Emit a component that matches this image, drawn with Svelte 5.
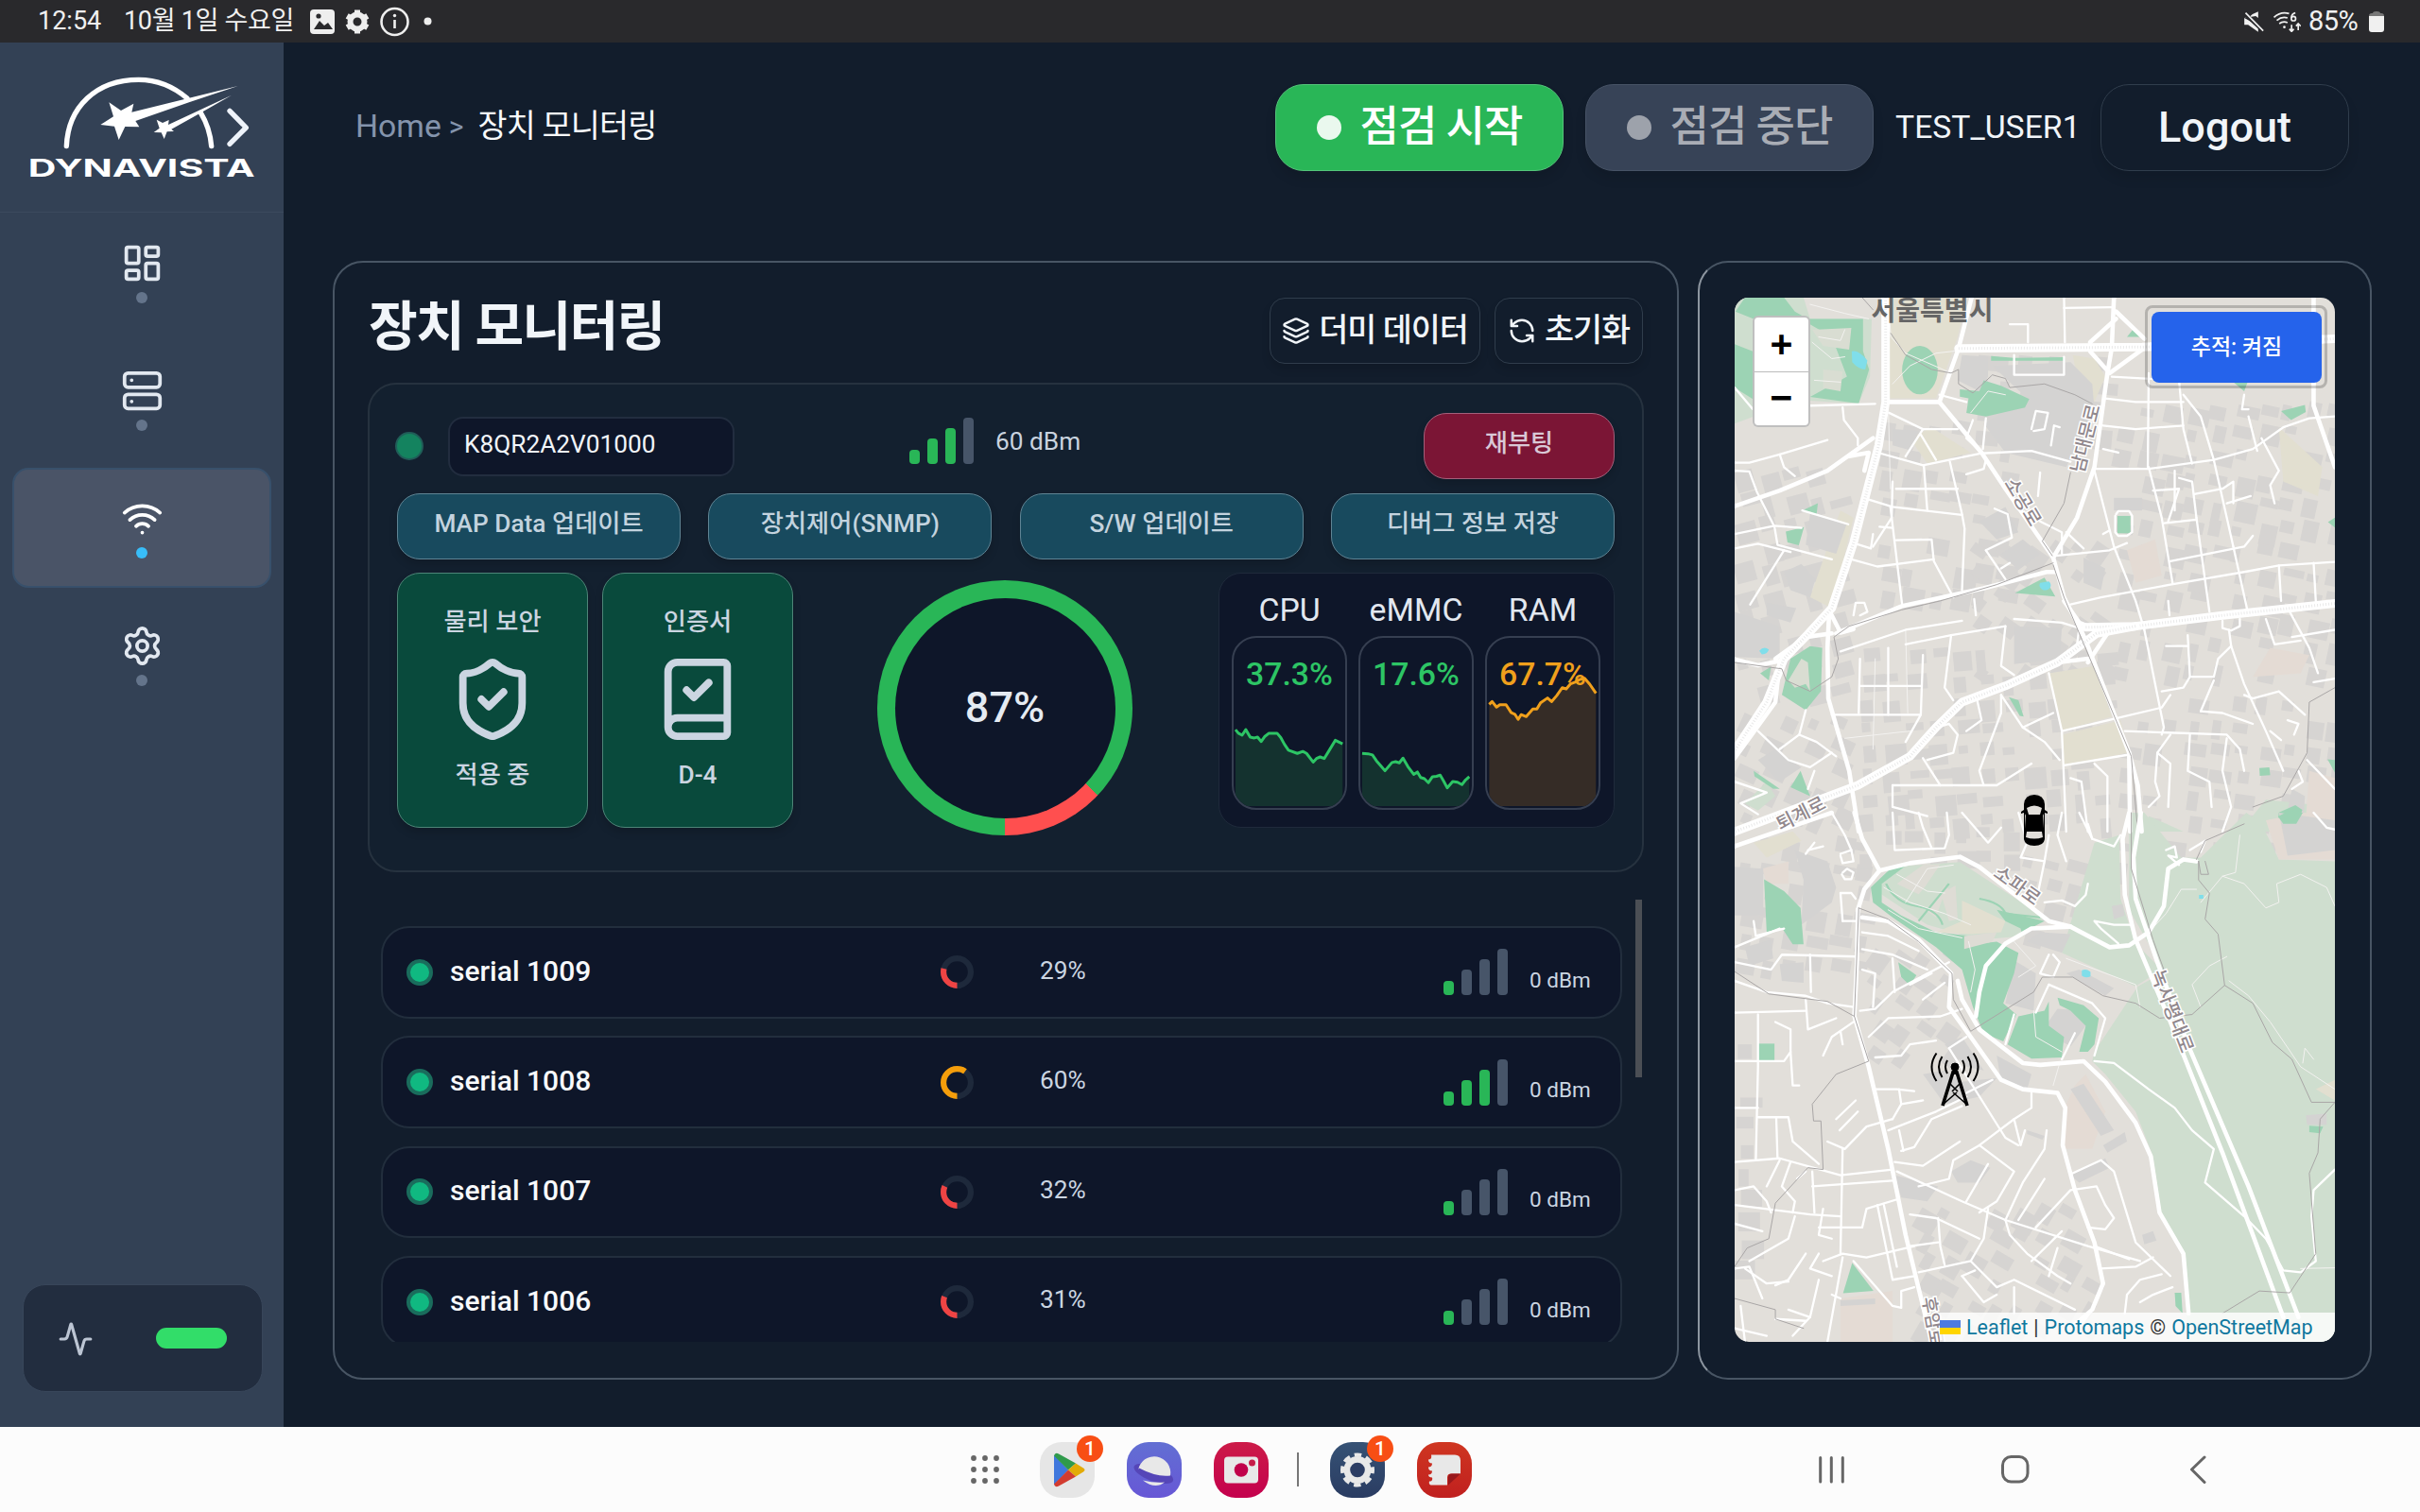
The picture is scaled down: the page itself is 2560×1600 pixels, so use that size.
<script>
  const nav = [
    { id: 'dashboard', active: false },
    { id: 'server', active: false },
    { id: 'wifi', active: true },
    { id: 'settings', active: false }
  ];
  const icons = {
    dashboard: 'M4 3h5a1 1 0 0 1 1 1v7a1 1 0 0 1-1 1H4a1 1 0 0 1-1-1V4a1 1 0 0 1 1-1z M15 3h5a1 1 0 0 1 1 1v3a1 1 0 0 1-1 1h-5a1 1 0 0 1-1-1V4a1 1 0 0 1 1-1z M15 12h5a1 1 0 0 1 1 1v7a1 1 0 0 1-1 1h-5a1 1 0 0 1-1-1v-7a1 1 0 0 1 1-1z M4 16h5a1 1 0 0 1 1 1v3a1 1 0 0 1-1 1H4a1 1 0 0 1-1-1v-3a1 1 0 0 1 1-1z',
    server: 'M4 2h16a2 2 0 0 1 2 2v4a2 2 0 0 1-2 2H4a2 2 0 0 1-2-2V4a2 2 0 0 1 2-2z M4 14h16a2 2 0 0 1 2 2v4a2 2 0 0 1-2 2H4a2 2 0 0 1-2-2v-4a2 2 0 0 1 2-2z M6 6h.01 M6 18h.01',
    wifi: 'M12 20h.01 M2 8.82a15 15 0 0 1 20 0 M5 12.859a10 10 0 0 1 14 0 M8.5 16.429a5 5 0 0 1 7 0',
    settings: 'M9.671 4.136a2.34 2.34 0 0 1 4.659 0 2.34 2.34 0 0 0 3.319 1.915 2.34 2.34 0 0 1 2.33 4.033 2.34 2.34 0 0 0 0 3.831 2.34 2.34 0 0 1-2.33 4.033 2.34 2.34 0 0 0-3.319 1.915 2.34 2.34 0 0 1-4.659 0 2.34 2.34 0 0 0-3.32-1.915 2.34 2.34 0 0 1-2.33-4.033 2.34 2.34 0 0 0 0-3.831A2.34 2.34 0 0 1 6.35 6.051a2.34 2.34 0 0 0 3.319-1.915 M15 12a3 3 0 1 1-6 0 3 3 0 0 1 6 0z',
    activity: 'M22 12h-2.48a2 2 0 0 0-1.93 1.46l-2.35 8.36a.25.25 0 0 1-.48 0L9.24 2.18a.25.25 0 0 0-.48 0l-2.35 8.36A2 2 0 0 1 4.49 12H2',
    layers: 'M12.83 2.18a2 2 0 0 0-1.66 0L2.6 6.08a1 1 0 0 0 0 1.83l8.58 3.91a2 2 0 0 0 1.66 0l8.58-3.9a1 1 0 0 0 0-1.83z M2 12a1 1 0 0 0 .58.91l8.6 3.91a2 2 0 0 0 1.65 0l8.58-3.9A1 1 0 0 0 22 12 M2 17a1 1 0 0 0 .58.91l8.6 3.91a2 2 0 0 0 1.65 0l8.58-3.9A1 1 0 0 0 22 17',
    refresh: 'M21 12a9 9 0 0 0-9-9 9.75 9.75 0 0 0-6.74 2.74L3 8 M3 3v5h5 M3 12a9 9 0 0 0 9 9 9.75 9.75 0 0 0 6.74-2.74L21 16 M16 16h5v5',
    shield: 'M20 13c0 5-3.5 7.5-7.66 8.95a1 1 0 0 1-.67-.01C7.5 20.5 4 18 4 13V6a1 1 0 0 1 1-1c2 0 4.5-1.2 6.24-2.72a1.17 1.17 0 0 1 1.52 0C14.51 3.81 17 5 19 5a1 1 0 0 1 1 1z M9 12l2 2 4-4',
    book: 'M4 19.5v-15A2.5 2.5 0 0 1 6.5 2H19a1 1 0 0 1 1 1v18a1 1 0 0 1-1 1H6.5a1 1 0 0 1 0-5H20 M9 9.5l2 2 4-4'
  };
  const actions = ['MAP Data 업데이트', '장치제어(SNMP)', 'S/W 업데이트', '디버그 정보 저장'];
  const checks = [
    { title: '물리 보안', icon: 'shield', state: '적용 중' },
    { title: '인증서', icon: 'book', state: 'D-4' }
  ];
  const metrics = [
    { name: 'CPU', value: '37.3%', tone: 'ok', box: '262 961 303 430', x0: 267, x1: 558, line: '267,1193 275,1202 285,1207 295,1193 307,1212 318,1214 327,1212 337,1223 347,1210 358,1202 380,1202 390,1213 400,1230 411,1245 435,1253 450,1248 460,1253 478,1275 487,1266 497,1262 508,1266 520,1248 538,1220 558,1229' },
    { name: 'eMMC', value: '17.6%', tone: 'ok', box: '601 961 303 430', x0: 606, x1: 897, line: '606,1253 622,1254 634,1257 645,1272 658,1286 668,1297 687,1276 697,1274 707,1277 717,1265 730,1286 746,1306 756,1300 765,1314 775,1317 786,1327 797,1312 808,1311 818,1308 828,1324 837,1340 852,1324 865,1326 877,1332 887,1320 897,1312' },
    { name: 'RAM', value: '67.7%', tone: 'warn', box: '940 961 304 430', x0: 946, x1: 1237, line: '946,1129 954,1122 966,1136 975,1130 992,1130 1006,1150 1016,1154 1025,1167 1033,1155 1047,1160 1065,1141 1076,1141 1086,1125 1105,1113 1116,1122 1130,1107 1145,1087 1156,1090 1168,1077 1180,1073 1193,1066 1206,1063 1220,1078 1237,1101' }
  ];
  const devices = [
    { name: 'serial 1009', pct: 29, level: 1, color: '#ef4444' },
    { name: 'serial 1008', pct: 60, level: 3, color: '#f59e0b' },
    { name: 'serial 1007', pct: 32, level: 1, color: '#ef4444' },
    { name: 'serial 1006', pct: 31, level: 1, color: '#ef4444' }
  ];

  // Building footprints: [x0, y0, x1, y1, angle] districts, filled with evenly spread blocks
  const districts = [
    [150, 130, 290, 330, 10], [250, 260, 400, 400, 35], [0, 180, 120, 420, -15], [400, 110, 635, 410, 12],
    [130, 370, 400, 560, -5], [400, 420, 635, 600, 8], [0, 440, 120, 560, 25], [250, 60, 400, 160, 5],
    [0, 570, 130, 720, 10], [130, 560, 300, 600, 0], [300, 590, 390, 680, 15], [190, 960, 390, 1100, 30],
    [140, 690, 220, 800, 35], [0, 740, 12, 1040, 0]
  ];
  let seed = 7;
  const rnd = () => (seed = (seed * 16807) % 2147483647) / 2147483647;
  const buildings = [];
  for (const [x0, y0, x1, y1, a] of districts) {
    for (let y = y0; y < y1; y += 25) {
      for (let x = x0; x < x1; x += 25) {
        if (rnd() < 0.8) buildings.push([x + rnd() * 8, y + rnd() * 8, 9 + rnd() * 15, 8 + rnd() * 15, a]);
      }
    }
  }

  const north = {
    light: ['76,91 235,91 250,150 392,150 388,310 362,384 250,376 150,370 120,420 76,440', '100,1490 150,1430 170,1470 130,1510', '1030,1525 1110,1568 1030,1568', '1459,1500 1300,1480 1240,1568 1459,1568'],
    sand: ['432,91 610,91 590,200 540,370 432,370', '800,1130 905,1110 945,1250 830,1290', '830,1300 965,1260 985,1350 830,1385', '530,450 620,520 520,550 480,480', '320,680 350,700 300,950 250,920', '1330,450 1430,560 1420,640 1340,600', '855,250 905,260 930,310 905,380 870,340'],
    pink: ['980,790 1045,760 1060,860 1000,880', '1310,1060 1400,1080 1380,1130 1270,1140', '1400,1400 1459,1420 1459,1568 1390,1568'],
    gray: ['600,250 660,255 660,310 640,350 590,320', '670,280 850,270 900,330 905,400 840,560 700,520 650,440 750,370', '250,690 335,715 310,800 240,775', '190,850 230,828 262,870 250,920 205,900', '150,935 218,950 205,990 150,970', '720,1000 830,1005 825,1090 720,1105', '640,710 700,670 730,740 680,760', '690,800 740,760 780,800 730,845', '880,810 930,840 920,900 880,880', '130,1370 170,1340 230,1390 180,1430', '950,645 1015,645 1015,680 950,680', '76,960 180,1000 180,1090 76,1085', '440,455 500,460 485,515 440,500', '1360,1450 1390,1470 1385,1568 1340,1568'],
    green: ['100,91 190,91 215,130 245,150 372,150 372,240 386,290 362,384 250,366 335,310 300,200 250,165 200,152 120,150 78,130', '76,220 118,240 118,372 76,340', '650,320 690,335 755,372 745,395 655,420 610,410 615,370 595,365 595,345 640,350', '667,253 720,258 835,256 835,266 667,266', '980,200 1020,200 995,178', '1335,405 1390,388 1392,408 1358,430', '232,680 268,660 265,690', '194,738 236,726 224,776 198,768', '722,908 790,866 815,918', '185,1190 205,1090 250,1055 278,1060 275,1180 240,1232', '135,1130 160,1112 155,1150', '708,1196 730,1205 742,1250 733,1248', '120,1400 180,1450 165,1450 122,1415', '205,1445 228,1400 250,1470', '1285,1392 1308,1390 1310,1412 1286,1414', '1330,1515 1368,1495 1384,1508 1378,1530 1345,1550 1328,1540', '1442,1368 1459,1370 1459,1405', '1443,712 1459,700 1459,727', '1225,325 1258,325 1250,350'],
    major: ['424,91 424,380 408,500 350,770 300,950 245,1022 190,1090 150,1210 76,1345', '592,232 1015,228 1459,205', '885,1003 1000,1000 1200,970 1459,937', '1000,1000 910,1020 820,1100 700,1165 600,1210 540,1280 480,1360 360,1440 76,1568'],
    mid: ['294,960 290,1060 292,1200 340,1400 362,1568', '622,91 592,232 548,380 424,380', '548,380 645,520 700,620 810,810 835,920 885,1040 985,1350 987,1568', '985,1350 1005,1440 1014,1568', '950,91 945,230 935,300 905,560 865,700 810,810', '955,130 1020,205', '1015,235 940,300 895,240', '955,150 895,215', '1410,91 1410,390 1459,560', '310,1020 460,945 650,895 795,850 815,850', '835,930 870,990 900,1005', '890,1100 935,1020', '885,1040 870,1000', '820,1100 890,1090', '300,970 320,1018 350,1008', '76,1092 130,1108 185,1095', '76,1365 170,1210 180,1100', '170,1090 240,1030 300,1020', '76,668 180,625 290,570 395,480', '340,530 385,520 375,570'],
    minor: ['76,548 110,548 180,525 290,485', '180,525 190,560 215,585', '76,570 110,572 128,630 168,725 175,775 300,815', '76,745 168,722 230,728', '76,785 130,772 190,790 205,795', '190,790 112,940', '232,680 338,718', '350,770 390,785 395,745', '76,340 118,400 250,390 400,385', '325,395 328,430 360,480 360,500', '432,410 510,455 590,455', '510,455 470,530', '412,522 510,555 645,522 760,515 850,545', '505,470 540,540', '512,555 520,680', '572,545 600,690 606,730 600,900', '448,620 590,620', '385,650 440,670 600,692', '440,600 438,700 395,780', '435,670 462,940', '448,762 530,760 535,820 580,920', '345,815 405,835 535,815', '410,725 440,728', '655,790 715,755 705,690 675,675', '655,790 700,870', '690,840 710,825', '548,360 610,380', '625,430 610,480 645,520', '655,425 648,510', '655,540 650,565 610,580', '720,250 720,305 835,305 835,255', '710,165 752,165 752,215', '835,91 837,215', '835,120 945,118', '760,455 770,405 798,410 790,455 765,460', '805,500 812,445 825,450', '780,575 775,640', '930,370 1000,380 1110,380', '925,445 1000,455 1110,445', '1030,300 1028,560', '945,310 1100,320', '1100,320 1110,455 1130,550', '1110,360 1150,420 1180,540 1195,620 1225,780', '905,565 1030,565 1180,540 1270,510 1340,450 1400,425 1459,420', '925,510 960,520', '905,570 950,780 1000,930 1020,1010', '1030,560 1060,700 1085,880', '1040,625 1100,620 1075,710', '1100,590 1130,600 1140,700', '1065,715 1140,705', '1090,570 1090,680', '1135,635 1200,620 1225,600 1225,660', '1080,820 1165,800 1250,780 1270,750', '1140,700 1170,960', '1225,780 1260,970', '1210,660 1265,640', '850,940 920,920 1080,885 1250,850 1330,832 1459,822', '1330,832 1335,930', '1410,825 1415,930', '815,805 940,790 980,770', '840,740 880,785', '780,710 830,740 830,800', '1075,930 1078,970', '1290,480 1330,570 1310,610 1320,660', '1260,420 1280,515', '1250,360 1245,400 1260,400', '470,1050 575,1025 700,1000', '575,1025 560,1170 580,1205', '700,1000 690,1110 720,1135', '720,980 830,990 870,1005 865,1050 820,1100', '800,1130 830,1290 840,1568', '635,1205 645,1260 610,1290', '690,1190 690,1240 640,1400 650,1440', '690,1190 740,1280 790,1320 825,1370', '740,1280 810,1240', '320,1070 470,1010 600,985', '365,1090 362,1240', '430,1060 430,1245', '300,1245 505,1245 470,1320', '365,1165 505,1165', '510,1080 505,1245', '830,1290 955,1255', '835,1385 985,1355', '530,1285 570,1270 590,1300 580,1350 520,1370', '440,1440 600,1440 680,1440 760,1380', '440,1440 440,1500 520,1525', '510,1365 550,1440', '240,1232 225,1300 265,1320 310,1360', '225,1300 180,1340', '130,1290 200,1370 250,1390 300,1350', '76,1430 150,1460 90,1490 130,1520', '260,1400 245,1450', '1020,1010 1065,1280 1060,1300', '1120,1025 1125,1140 1180,1140 1190,1090 1220,1055 1215,1010', '1060,1180 1110,1170 1125,1140', '1070,1055 1120,1055', '955,1255 1060,1225 1080,1190', '975,1290 1210,1300 1240,1340 1250,1400', '1220,1055 1250,1160 1300,1290 1340,1400', '1150,1235 1200,1240 1270,1270', '1150,1235 1180,1150', '1210,1310 1200,1400 1220,1500 1200,1568', '1250,1190 1270,1200 1330,1180 1390,1245', '1300,980 1320,1050 1380,1040', '1355,960 1400,1060 1420,1130', '1360,1030 1459,1010', '1410,1155 1459,1145', '1080,1300 1050,1350 1045,1430 1055,1470 1030,1500', '1125,1300 1120,1400 1170,1430 1175,1500', '905,1380 935,1415 935,1568', '850,1420 875,1430 890,1568', '1050,1350 1080,1380 1075,1500', '1350,1260 1375,1270 1365,1300', '1310,1290 1335,1315', '1395,1370 1459,1450', '1200,985 1200,1005 1220,1012 1240,1000 1240,980', '1375,1400 1385,1430 1360,1450', '955,690 960,682 985,682 992,695 992,740 980,750 960,750 953,740 953,695', '350,970 355,935 375,935 382,960 365,970', '925,745 940,735', '628,925 632,970'],
    fine: ['430,91 436,200 470,245 575,300', '440,330 480,280 540,245 592,238', '250,110 330,135 385,150', '255,215 300,260 330,255', '260,320 320,325', '270,200 320,210 330,180', '430,380 435,620', '620,410 660,350 700,360', '400,1090 395,1340', '330,1310 480,1290', '470,1010 475,1240'],
    gray_lines: ['436,190 470,250 530,290 575,300 592,290 592,330 625,355 670,305 700,315 710,340 790,330 860,360 900,385', '850,575 835,660 785,765 808,805', '810,825 680,885 550,930 460,955 340,1000 305,1030 315,1090 300,1140 250,1180 195,1150 185,1118 76,1100', '810,830 835,920 990,1360 1005,1568', '1459,1170 1400,1210 1395,1350 1340,1470 1270,1500', '370,91 395,125']
  };
  const south = {
    light: ['905,80 962,60 965,230 1000,350 1060,420 1000,465 830,375', '1020,0 1105,120 1150,120 1255,0 1290,30 1330,125 1459,130 1459,1416 1120,1416 1110,1170 1060,1080 1040,920 1000,800 930,700 900,665 905,640 1005,465 1060,430 1030,350 985,260 985,0', '390,200 440,145 595,132 790,280 740,330 640,340 520,300'],
    sand: ['600,235 700,290 690,320 620,325 540,320 600,290', '0,90 0,90 0,90', '120,80 210,50 230,75 150,120', '1415,740 1459,715 1459,770'],
    pink: ['835,900 840,780 860,730 885,700 930,800 900,900', '320,1300 440,1280 440,1416 320,1416', '1300,20 1390,0 1459,30 1459,125 1330,125', '140,150 200,130 200,190 150,190'],
    gray: ['76,145 142,150 142,275 76,275', '215,100 290,130 310,200 300,240 230,300 235,180', '750,345 780,320 850,325 830,375', '720,395 770,430 765,530 700,510', '790,575 820,525 880,530 885,570 850,625 795,590', '850,740 880,725 950,850 920,865', '925,890 975,855 980,880 935,910', '850,970 930,925 940,950 870,990', '510,700 560,690 600,720 680,710 640,760 560,780', '560,620 600,600 650,690 610,680', '575,960 620,930 665,950 640,990 590,990', '680,650 760,700 750,740 690,720', '445,970 545,1000 520,1040 460,1030', '1330,0 1459,20 1459,100 1350,115', '1015,1130 1040,1120 1048,1145 1020,1155', '1392,810 1440,805 1440,835 1395,835', '945,250 970,245 975,275 950,285', '840,430 870,420 950,470 930,490', '180,405 235,400 235,455 185,450', '100,360 160,340 165,390 110,410', '320,1305 400,1300 400,1315 320,1320', '750,850 790,865 785,875 750,860'],
    green: ['144,178 190,210 228,255 235,352 210,352 185,308 150,320', '390,200 440,145 470,142 415,190 415,240 460,275 540,320 620,330 605,355 680,345 730,375 720,430 695,510 725,540 695,612 650,590 625,520 600,420 540,360 440,280 395,240', '680,260 790,290 765,305 740,330 735,310 700,290', '453,400 495,435 480,462 460,440', '130,618 168,618 168,665 130,665', '730,545 790,530 800,505 800,570 835,600 830,655 760,658 705,620', '820,495 880,515 915,550 905,620 890,640 870,640 885,570 850,530 825,515', '347,1205 396,1280 326,1286', '1090,1285 1105,1285 1108,1340 1092,1320', '1328,10 1345,0 1385,0 1370,30 1340,30', '1400,838 1432,840 1425,858 1400,855'],
    major: [],
    mid: ['352,0 370,70 410,155 375,205 360,260', '410,155 480,135 595,118 640,145 800,290 850,305 940,360 985,355 1030,320 1065,250 1075,150 1110,125 1140,130', '850,305 760,310 700,350 655,410 640,480 632,545', '360,260 358,400 352,545 385,680 430,900 470,1130 530,1416', '370,280 430,290 500,340 575,430 570,520 620,600 690,715 740,740 820,750 838,790 832,890 860,1010 905,1150 925,1260 900,1330 860,1370', '590,450 600,500 640,580 740,670 780,675 880,665 930,720 1000,830 1035,920 1055,1070 1110,1180 1122,1340', '985,0 970,70 975,220 1000,340 1080,560 1200,910 1340,1350', '1012,0 995,120 1000,230 1050,400 1120,620 1260,1000 1375,1350', '76,90 200,40 300,0'],
    minor: ['905,665 950,670 1030,740 1090,790 1130,850 1180,900 1160,990 1250,1080 1300,1140 1340,1225 1380,1230 1415,1200 1405,1080 1410,1010 1459,955', '990,300 950,300 905,290 920,310 960,350', '810,380 825,400 810,440 780,430 800,380', '800,460 900,510 930,550 905,650', '800,460 770,535', '720,540 700,620', '860,590 830,660', '1070,100 1090,90 1095,120 1075,115 1100,140', '1150,105 1160,75 1125,100', '875,1370 900,1330', '76,450 150,480 240,490 290,510 350,520', '250,380 252,480', '76,400 160,420 185,380 360,385', '76,360 180,310', '76,535 240,530', '240,500 245,580 310,550', '130,540 130,680 125,930', '170,560 205,580 205,640 210,730 225,730', '76,665 190,665 205,640', '76,790 130,790', '130,815 200,815 210,880 270,940', '172,815 175,925', '76,935 180,925 320,970 440,955', '350,560 300,600 280,650', '320,585 325,620', '310,820 355,770', '318,850 360,800', '290,880 330,900 380,840 440,820', '325,900 320,1180', '255,1000 440,985', '255,960 260,1070', '400,655 460,650 480,620 540,610', '365,530 400,525 440,480 570,400', '370,420 400,430 395,520', '385,600 430,550 550,545 600,525', '370,320 430,330 500,370', '370,365 440,380 520,420', '440,390 445,480', '480,460 530,430', '510,500 560,455', '400,740 450,740 490,745', '430,850 540,800 610,760', '460,905 490,895 530,820 600,785', '455,850 465,905', '460,780 510,770', '440,820 460,780 455,740', '570,630 700,870 730,890', '570,630 610,600', '610,750 670,715', '445,935 510,945 595,880', '450,960 600,1040 700,1090 890,1160 1010,1200', '500,1000 570,980 580,930 640,890 720,820 760,790 760,750', '640,890 720,960 680,1040 640,1070', '610,1040 660,940', '720,820 735,890 745,850', '795,850 790,900 740,990 700,1090', '790,980 730,1090', '770,1110 850,1010 910,1000 930,1050 950,1085 930,1115 890,1110', '855,965 920,930 950,960 1000,1150 1080,1240', '905,1160 985,1195', '920,1220 1000,1215 1040,1190', '980,1290 1010,1250 1060,1235', '975,1340 980,1290', '1085,1270 1040,1290 1010,1310', '700,1090 710,1130 750,1180 820,1240 850,1260', '760,1200 830,1120', '660,1060 650,1140 620,1200 500,1230', '480,1075 540,1085 640,1140', '545,1150 480,1160', '545,1085 550,1160 560,1210', '620,1200 680,1270 720,1250 860,1330', '600,1240 650,1310 680,1290', '600,1240 630,1225', '720,1270 720,1340', '820,1165 800,1240', '76,1050 250,1075 320,1080', '76,1100 140,1120', '160,1070 150,1040 120,1000 76,1010', '180,930 150,1000', '205,935 185,1000 215,1040 210,1070', '240,960 220,980', '280,1060 270,1130 300,1140', '240,1180 200,1250 170,1265', '110,1200 200,1140 215,1080', '100,1220 150,1260 200,1255', '76,1220 110,1215 140,1300', '280,1200 325,1180 380,1190 490,1160', '270,1110 370,1110 380,1060 450,1035', '405,1050 440,1250 490,1240', '420,1050 450,1215', '325,1190 290,1416', '350,1200 440,1320 460,1325 460,1280 490,1270', '270,1250 250,1350 210,1400', '200,1330 250,1350', '170,1355 240,1360', '76,1380 150,1400', '90,1320 100,1416', '300,1290 320,1300', '270,1180 250,1220 300,1240', '120,290 125,330 190,310', '325,290 320,215 345,215 355,230', '325,290 355,290', '320,110 345,100 350,130 325,135 320,115', '300,0 330,60 345,100', '245,100 280,90', '240,110 260,80', '440,0 445,100 560,95 570,60 565,0', '500,0 510,40 530,95', '600,0 660,80 690,40', '730,0 750,80 735,120 790,130 800,60', '790,130 775,215', '790,240 830,235 860,250 885,220 890,190', '830,0 820,60 840,130', '870,0 900,70 950,90 965,60', '900,70 890,30', '1410,0 1440,40 1459,45', '325,160 335,150 350,160 345,178 330,178 323,165'],
    fine: ['420,200 480,240 560,270 620,300', '430,260 500,310 600,335', '450,165 520,210 560,215', '1240,60 1230,160 1200,170 1150,240', '1140,205 1105,205 1070,270 1030,320', '1200,170 1250,190 1300,255 1330,240 1325,190 1380,165 1440,200 1459,250', '720,345 770,410 730,440', '615,345 630,420 620,480', '765,530 770,600 830,640', '840,390 1000,460 1010,520', '1215,450 1260,490 1310,560 1380,680 1459,740', '1210,385 1170,410 1130,460 1150,520', '470,240 520,150 580,140', '825,670 810,730', '1385,670 1390,630 1410,660', '1380,1220 1459,1218'],
    gray_lines: ['362,255 430,285 500,345 577,430 580,500 620,585 765,480 785,440 855,440 925,490 1000,510 1055,550 1130,540 1205,462 1190,325 1160,285 1170,215 1145,180 1145,130', '362,255 352,545 385,665 310,700 255,780 258,825 275,825 280,955 245,950 170,1045 155,1140 105,1165 76,1215', '352,545 290,505 155,485 76,425', '1205,462 1270,510 1315,615 1360,660 1405,775 1459,775 1425,820 1420,910 1400,965 1415,1180 1355,1285 1285,1280 1200,1340', '990,0 990,150 1040,340 1065,420', '1140,125 1160,75 1250,30', '76,1300 170,1330 170,1355 235,1380', '1145,130 1150,165 1168,165 1160,130']
  };
  const parts = [
    { tf: 'translate(-35 -35) scale(.4592 .38265)', d: north },
    { tf: 'translate(-35 545) scale(.4592 .3954)', d: south }
  ];
  const areas = [['light', '#cfdecf'], ['sand', '#e2dfd0'], ['pink', '#e4dbd4'], ['gray', '#d4d3d2']];
  const labels = [
    ['남대문로', 371, 149, -76, 20], ['소공로', 305, 216, 59, 20], ['퇴계로', 70, 546, -27, 20],
    ['소파로', 299, 622, 36, 20], ['녹사평대로', 463, 755, 69, 20], ['후암로', 210, 1083, 80, 19]
  ];
</script>

{#snippet icon(name, cls)}
  <svg class={cls} viewBox="0 0 24 24" fill="none" stroke="currentColor" stroke-width="2" stroke-linecap="round" stroke-linejoin="round"><path d={icons[name]} /></svg>
{/snippet}

{#snippet bars(level)}
  <div class="bars">
    {#each [1, 2, 3, 4] as n}<i class="b{n}" class:on={n <= level}></i>{/each}
  </div>
{/snippet}

<div class="screen">
  <div class="status">
    <span class="clock">12:54</span><span class="date">10월 1일 수요일</span>
    <svg class="s-icons" viewBox="0 0 140 46">
      <rect x="8" y="10" width="26" height="26" rx="4" fill="#eee" /><path d="M12 31l6-9 5 5 4-3 5 7z" fill="#29292c" /><circle cx="17" cy="17" r="2.6" fill="#29292c" />
      <circle cx="58" cy="23" r="7.5" fill="none" stroke="#eee" stroke-width="6" /><g stroke="#eee" stroke-width="6"><path d="M58 10.500v5M58 30.500v5M47.200 16.800l4.300 2.500M64.500 26.700l4.300 2.500M47.200 29.200l4.300-2.500M64.500 19.300l4.300-2.500" /></g>
      <circle cx="97.500" cy="23" r="14" fill="none" stroke="#eee" stroke-width="2.600" /><path d="M97.500 21v9" stroke="#eee" stroke-width="2.600" /><circle cx="97.500" cy="16.500" r="1.700" fill="#eee" />
      <circle cx="132.500" cy="22.500" r="4" fill="#eee" />
    </svg>
    <svg class="s-right" viewBox="99 33 182 66">
      <path d="M102 54h12l14-12 18-8v20l-8-6M102 54v22h12l32 22V78z" fill="#f0f0f0" /><path d="M101 38l62 58" stroke="#29292c" stroke-width="12" /><path d="M106 38l56 57" stroke="#f0f0f0" stroke-width="5" />
      <g fill="none" stroke="#f0f0f0" stroke-width="5"><path d="M196 52q22-20 48-12M205 62q16-14 34-8M213 72q12-9 26-3M252 76v20M245 89l7 8 7-8M273 93V73M266 80l7-8 8 8" /><path d="M264 38q-12 2-13 16" /><circle cx="258" cy="56" r="7" /></g><circle cx="229" cy="83" r="4" fill="#f0f0f0" />
    </svg>
    <span class="pct">85%</span>
    <svg class="batt" viewBox="0 0 16 22"><path d="M4 2q0-2 4-2t4 2h1q3 0 3 3H0q0-3 3-3z" fill="#777" /><path d="M0 5h16v14q0 3-3 3H3q-3 0-3-3z" fill="#f0f0f0" /></svg>
  </div>

  <div class="body">
    <aside>
      <div class="logo">
        <svg viewBox="0 45 900 537">
          <path d="M211 374C219 90 560 93 602 226M638 266Q668 315 671 374" fill="none" stroke="none" />
          <path d="M211 374C216 250 305 163 440 163Q525 163 594 222M637 268Q666 315 671 374" fill="none" stroke="#fff" stroke-width="16" stroke-linecap="round" />
          <path d="M346 235l38 26 40-22-6 27L755 183 600 235 430 294l12 19-45-1-20 42-14-43-44-5 41-26z" fill="#fff" />
          <path d="M497 290l19 10 20-9-2 15L735 212 630 272 544 320l8 7-22 1-9 23-9-20-24-1 18-13z" fill="#fff" />
          <path d="M729 262l52 53-52 52" fill="none" stroke="#eef3fa" stroke-width="16" stroke-linecap="round" stroke-linejoin="round" />
          <text x="89" y="471" textLength="720" lengthAdjust="spacingAndGlyphs" class="brand">DYNAVISTA</text>
        </svg>
      </div>
      <nav>
        {#each nav as n}
          <div class="nav-item" class:active={n.active}>{@render icon(n.id, 'nav-ic')}<i></i></div>
        {/each}
      </nav>
      <div class="health">{@render icon('activity', 'act-ic')}<i></i></div>
    </aside>

    <main>
      <header>
        <div class="crumbs"><span>Home</span><span class="sep">&gt;</span><b>장치 모니터링</b></div>
        <div class="top-actions">
          <button class="big start"><i></i>점검 시작</button>
          <button class="big stop"><i></i>점검 중단</button>
          <span class="user">TEST_USER1</span>
          <button class="big logout">Logout</button>
        </div>
      </header>

      <div class="panels">
        <section class="panel devices">
          <div class="title-row">
            <h1>장치 모니터링</h1>
            <button class="ghost dummy">{@render icon('layers', 'btn-ic')}더미 데이터</button>
            <button class="ghost reset">{@render icon('refresh', 'btn-ic')}초기화</button>
          </div>

          <div class="card">
            <div class="line1">
              <i class="live"></i>
              <div class="field">K8QR2A2V01000</div>
              <div class="signal">{@render bars(3)}<span>60 dBm</span></div>
              <button class="act reboot">재부팅</button>
            </div>
            <div class="line2">
              {#each actions as a}<button class="act">{a}</button>{/each}
            </div>
            <div class="line3">
              {#each checks as c}
                <div class="check"><span>{c.title}</span>{@render icon(c.icon, 'check-ic')}<span>{c.state}</span></div>
              {/each}
              <div class="ring"><div>87%</div></div>
              <div class="metrics">
                {#each metrics as m}
                  <div class="metric {m.tone}">
                    <span>{m.name}</span>
                    <div class="tile">
                      <svg viewBox={m.box} preserveAspectRatio="none">
                        <polygon points="{m.x0},1386 {m.line} {m.x1},1386" />
                        <polyline points={m.line} />
                      </svg>
                      <b>{m.value}</b>
                    </div>
                  </div>
                {/each}
              </div>
            </div>
          </div>

          <div class="list-wrap">
            <div class="list">
              {#each devices as d}
                <div class="row">
                  <i class="dot"></i>
                  <span class="name">{d.name}</span>
                  <svg class="mini" viewBox="0 0 34 34"><circle cx="17" cy="17" r="14" stroke="#1e293b" /><circle cx="17" cy="17" r="14" pathLength="100" stroke={d.color} stroke-dasharray="{d.pct} 100" transform="rotate(90 17 17)" /></svg>
                  <span class="rate">{d.pct}%</span>
                  {@render bars(d.level)}
                  <span class="dbm">0 dBm</span>
                </div>
              {/each}
            </div>
            <div class="thumb"></div>
          </div>
        </section>

        <section class="panel map-panel">
          <div class="map">
            <svg class="tiles" viewBox="0 0 635 1105">
              <rect width="635" height="1105" fill="#e2dfda" />
              {#each buildings as [x, y, w, h, a]}
                <rect {x} {y} width={w} height={h} fill="#d6d4d2" transform="rotate({a} {x + w / 2} {y + h / 2})" />
              {/each}
              {#each parts as p}
                <g transform={p.tf}>
                  {#each areas as [k, c]}{#each p.d[k] as pts}<polygon points={pts} fill={c} />{/each}{/each}
                  {#each p.d.green as pts}<polygon points={pts} fill="#9cd3b4" />{/each}
                </g>
              {/each}
              <g transform="translate(-35 -35) scale(.4592 .38265)">
                <ellipse cx="503" cy="292" rx="41" ry="67" fill="#9cd3b4" />
                <rect x="958" y="695" width="30" height="48" fill="#9cd3b4" />
                <path d="M346 240q15-5 36 25l-5 25q-15 0-30-20zM780 880a13 14 0 1 0 20-4zM133 1068q10-14 22-4-2 12-16 14z" fill="#80deea" />
                <path d="M200 1150l30-60 15 10 5 80-10-20-25 10zM255 180l90-5-5 60-60-10zM280 290l45 5-5 55-40-8z" fill="#d9ddd2" />
              </g>
              <g transform="translate(-35 545) scale(.4592 .3954)">
                <path d="M450 190l60-50 40-2-35 60-15 20zM520 265l40-70 10 10 15-10 5 90-20 5-15-60-15 50zM605 330l75-10-10 25-65 20z" fill="#dedcd5" />
                <path d="M876 422q10-6 20 4v12q-12 6-20-2zM1146 220h10v10h-10z" fill="#80deea" />
                <path d="M425 190q20 50 70 60t60 50M500 290l70-100M640 230q50 10 60 40l80 10" fill="none" stroke="#9cd3b4" stroke-width="5" />
              </g>
              {#each parts as p}
                <g transform={p.tf} class="roads">
                  {#each p.d.fine as pts}<polyline points={pts} class="fine" />{/each}
                  {#each p.d.minor as pts}<polyline points={pts} class="minor" />{/each}
                </g>
              {/each}
              {#each parts as p}
                <g transform={p.tf} class="roads">
                  {#each p.d.mid as pts}<polyline points={pts} class="mid" />{/each}
                  {#each p.d.major as pts}<polyline points={pts} class="major" /><polyline points={pts} class="tie" />{/each}
                  {#each p.d.gray_lines as pts}<polyline points={pts} class="bound" />{/each}
                </g>
              {/each}
              <text x="209" y="24" class="city">서울특별시</text>
              {#each labels as [t, x, y, r, s]}
                <text class="road-name" font-size={s} transform="translate({x} {y}) rotate({r})" dy="7">{t}</text>
              {/each}
            </svg>
            <svg class="car" viewBox="0 0 28 54"><path d="M3 10Q4 0 14 0t11 10v6l3 2v2l-3-1v28q-1 7-11 7T3 47V19l-3 1v-2l3-2z" fill="#000" /><path d="M6 14q8-5 16 0l-2 7H8zM6 39h16l1 6q-9 3-18 0zM5 22v14l-1-16zM23 22v14l1-16z" fill="#e2dfda" /></svg>
            <svg class="tower" viewBox="0 0 54 60"><circle cx="27" cy="18" r="4" /><path d="M27 18v8M25.500 22L14 59M28.500 22L40 59" stroke-width="3.600" /><path d="M14 58l15-13M40 58L25 45M22 36l8 8M32 36l-8 8" stroke-width="1.600" /><path d="M19 11q-4 7 0 14M13.500 7q-7 11 0 22M7.500 3.500q-10 14.500 0 29.500M35 11q4 7 0 14M40.500 7q7 11 0 22M46.500 3.500q10 14.500 0 29.500" stroke-width="2" /></svg>
            <div class="zoom"><span>+</span><span>−</span></div>
            <div class="track"><button>추적: 켜짐</button></div>
            <div class="attr">
              <svg viewBox="0 0 22 15"><path fill="#4c7be1" d="M0 0h22v8H0z" /><path fill="#ffd500" d="M0 8h22v7H0z" /></svg>
              <a>Leaflet</a><span>|</span><a>Protomaps</a><span>©</span><a>OpenStreetMap</a>
            </div>
          </div>
        </section>
      </div>
    </main>
  </div>

  <footer>
    <svg class="apps" viewBox="0 0 32 32">{#each [4, 16, 28] as y}{#each [4, 16, 28] as x}<circle cx={x} cy={y} r="2.900" fill="#666" />{/each}{/each}</svg>
    <div class="app play">
      <svg viewBox="0 0 58 58"><path d="M15 13v32l15-16z" fill="#3f77dd" /><path d="M15 14q1-4 5-2l18 10-8 7z" fill="#2f9a4b" /><path d="M38 22l8 5q3 2 0 4l-8 5-8-7z" fill="#e3ab05" /><path d="M15 44q1 4 5 2l18-10-8-7z" fill="#d23c30" /></svg>
      <em>1</em>
    </div>
    <div class="app net">
      <svg viewBox="0 0 58 58"><ellipse cx="29" cy="33" rx="22" ry="8" transform="rotate(20 29 31)" fill="#5546b8" /><path d="M12 29a17 17 0 1 1 34 6q-14 2-33-8zM17 40q12 3 23 2-10 8-23-2z" fill="#e8e8e8" /></svg>
    </div>
    <div class="app cam">
      <svg viewBox="0 0 58 58"><rect x="11" y="15" width="36" height="28" rx="4" fill="#e8e8e8" /><circle cx="29" cy="29" r="7.300" fill="#c0004a" /><circle cx="40.500" cy="21.500" r="3.500" fill="#c61c48" /></svg>
    </div>
    <div class="divider"></div>
    <div class="app set">
      <svg viewBox="0 0 58 58"><circle cx="29" cy="29" r="14.500" fill="#e8e8e8" /><circle cx="29" cy="29" r="16" fill="none" stroke="#e8e8e8" stroke-width="4" stroke-dasharray="7.500 5.066" stroke-dashoffset="3.750" /><circle cx="29" cy="29" r="7.800" fill="#2b3c63" /></svg>
      <em>1</em>
    </div>
    <div class="app note">
      <svg viewBox="0 0 58 58"><path d="M16 13h24q6 0 6 6v14H36q-4 0-4 4v8H16q-4 0-3-4 4 0 3-4-4 0-4-3 4 0 4-4-4 0-4-4 4 0 4-4-4 0-4-4 4 0 3-5z" fill="#e8e8e8" /><path d="M33 45v-8q0-4 4-4h9z" fill="#98181c" /></svg>
    </div>
    <svg class="keys" viewBox="0 0 412 32" fill="none" stroke="#666" stroke-width="3" stroke-linecap="round"><path d="M3.700 3.500v25.500M15.300 3.500v25.500M27.300 3.500v25.500" /><rect x="196.500" y="2.500" width="26.500" height="26.500" rx="9" /><path d="M410 3l-13.500 13L410 29.500" stroke-linejoin="round" /></svg>
  </footer>
</div>

<style>
  :global(body) { margin: 0; background: #121d2c; }
  * { box-sizing: border-box; }
  button { font: inherit; color: inherit; padding: 0; margin: 0; display: flex; align-items: center; justify-content: center; white-space: nowrap; }
  .screen { width: 2560px; height: 1600px; overflow: hidden; display: flex; flex-direction: column; font-family: Roboto, 'Noto Sans CJK KR', sans-serif; color: #f1f5f9; background: #121d2c; line-height: 1.2; }
  .status { height: 45px; flex: none; background: #29292c; display: flex; align-items: center; padding: 0 38px 0 40px; font-size: 27px; color: #f0f0f0; white-space: nowrap; }
  .clock { width: 91px; }
  .date { width: 189px; letter-spacing: -.3px; }
  .s-icons { width: 140px; height: 46px; }
  .s-right { width: 61px; height: 22px; margin-left: auto; }
  .pct { margin-left: 8px; width: 64px; font-size: 29px; letter-spacing: -.5px; }
  .batt { width: 16px; height: 22px; }

  .body { display: flex; height: 1465px; flex: none; }
  aside { width: 300px; flex: none; background: #334155; display: flex; flex-direction: column; }
  .logo { height: 180px; border-bottom: 1px solid #3c4a5e; }
  .logo svg { width: 300px; height: 179px; display: block; }
  .brand { font-family: Inter, sans-serif; font-weight: 700; font-size: 78px; fill: #fff; }
  nav { display: flex; flex-direction: column; gap: 8px; padding: 0 13px; }
  .nav-item { height: 127px; border-radius: 17px; border: 2px solid transparent; display: flex; flex-direction: column; align-items: center; justify-content: center; gap: 8px; color: #e2e8f0; }
  .nav-item.active { background: #4a5467; border-color: #38506b; color: #fff; }
  .nav-item i { width: 12px; height: 12px; border-radius: 50%; background: #64748b; }
  .nav-item.active i { background: #38bdf8; }
  .nav-item :global(.nav-ic) { width: 45px; height: 45px; }
  .health { margin: auto 22px 37px 24px; height: 114px; border-radius: 24px; border: 1px solid #38465a; background: #222d3f; display: flex; align-items: center; justify-content: space-between; padding: 0 37px 0 36px; color: #bcc5d3; }
  .health :global(.act-ic) { width: 38px; height: 38px; margin-top: 2px; }
  .health i { width: 75px; height: 22px; border-radius: 11px; background: #32dd69; }

  main { flex: 1; display: flex; flex-direction: column; }
  header { height: 231px; padding: 44px 75px 0 76px; display: flex; align-items: flex-start; justify-content: space-between; }
  .crumbs { height: 90px; display: flex; align-items: center; font-size: 33.75px; color: #8494ac; }
  .crumbs .sep { margin: 0 15px 0 8px; font-size: 30px; }
  .crumbs b { font-weight: 400; color: #f8fafc; letter-spacing: -.8px; }
  .top-actions { display: flex; align-items: center; }
  .big { height: 92px; border-radius: 30px; border: 1px solid #303d4c; background: #121d2c; font-size: 45px; font-weight: 500; box-shadow: 0 8px 12px rgba(0, 0, 0, .1); }
  .big i { width: 26px; height: 26px; border-radius: 50%; background: currentColor; opacity: .9; margin-right: 20px; }
  .start { width: 305px; background: #29b657; border-color: #54c47a; margin-right: 23px; color: #fff; letter-spacing: -1px; }
  .stop { width: 305px; background: #374357; border-color: #475366; margin-right: 23px; color: #a9adb5; letter-spacing: -1px; }
  .user { width: 217px; font-size: 33.75px; }
  .logout { width: 263px; }

  .panels { display: flex; padding: 0 0 0 52px; gap: 20px; }
  .panel { height: 1184px; border: 2px solid #485564; border-radius: 32px; }
  .devices { width: 1424px; padding: 37px 36px 0 35px; }
  .title-row { display: flex; height: 70px; margin-left: 1px; }
  h1 { margin: 0 auto 0 0; font-size: 56.25px; line-height: 62px; font-weight: 700; letter-spacing: -1.7px; }
  .ghost { height: 70px; border-radius: 16px; border: 1px solid #303d4c; background: #121d2c; font-size: 33.75px; font-weight: 500; box-shadow: 0 6px 10px rgba(0, 0, 0, .12); letter-spacing: -1px; }
  .ghost :global(.btn-ic) { width: 30px; height: 30px; margin-right: 9px; }
  .dummy { width: 223px; margin-right: 15px; }
  .reset { width: 157px; }

  .card { width: 1350px; height: 518px; margin-top: 20px; border: 2px solid #26323f; border-radius: 30px; background: #13202f; padding: 30px 29px; }
  .line1 { height: 70px; display: flex; align-items: center; }
  .live { width: 30px; height: 30px; margin: 0 26px 0 -2px; border-radius: 50%; background: #14835f; border: 2px solid #205d58; }
  .field { width: 303px; height: 63px; border-radius: 16px; border: 2px solid #222d3f; background: #0e1629; display: flex; align-items: center; padding: 0 0 3px 15px; font-size: 26.25px; }
  .signal { display: flex; align-items: center; gap: 23px; margin-left: 185px; font-size: 26.25px; color: #c9d3df; padding-bottom: 14px; height: 70px; }
  .signal :global(.bars) { margin-top: 2px; }
  .signal span { margin-top: 6px; }
  .bars { width: 68px; height: 49px; display: flex; align-items: flex-end; gap: 7.6px; }
  .bars i { width: 11.3px; border-radius: 4px; background: #475569; flex: none; }
  .bars i.on { background: #29b657; }
  .bars .b1 { height: 15px; } .bars .b2 { height: 27px; } .bars .b3 { height: 38px; } .bars .b4 { height: 49px; }
  .act { height: 70px; border-radius: 24px; border: 1px solid #5f8494; background: #184a5e; color: #c3d3de; font-size: 26.25px; font-weight: 500; padding-bottom: 5px; box-shadow: 0 5px 8px rgba(0, 0, 0, .15); }
  .reboot { width: 202px; margin-left: auto; background: #7b1535; border-color: #a3607a; color: #d9c8d6; }
  .line2 { margin-top: 15px; display: grid; grid-template-columns: repeat(4, 300px); justify-content: space-between; }
  .line3 { margin-top: 14px; display: flex; height: 270px; }
  .check { width: 202px; height: 270px; margin-right: 15px; border-radius: 24px; border: 1px solid #4d8577; background: #094a3c; display: flex; flex-direction: column; align-items: center; justify-content: space-between; padding: 36px 0 39px; font-size: 26.25px; font-weight: 500; color: #cbd5e1; box-shadow: 0 5px 8px rgba(0, 0, 0, .15); }
  .check :global(.check-ic) { width: 94px; height: 94px; }
  .ring { width: 270px; height: 270px; margin: 8px 0 0 74px; border-radius: 50%; background: conic-gradient(from 180deg, #29b657 0 87%, #ff4f4f 87% 100%); display: flex; align-items: center; justify-content: center; }
  .ring div { width: 233px; height: 233px; border-radius: 50%; background: #0e1629; display: flex; align-items: center; justify-content: center; font-size: 45px; font-weight: 500; color: #e5ebf2; }
  .metrics { width: 419px; height: 270px; margin-left: auto; border-radius: 24px; border: 1px solid #1f2a3b; background: #0e1629; padding: 0 13px; display: flex; gap: 12px; }
  .metric { width: 122px; display: flex; flex-direction: column; align-items: center; font-size: 33.75px; color: #e2e8f0; }
  .metric span { line-height: 40px; margin: 19px 0 7px; }
  .tile { width: 122px; height: 184px; border: 2px solid #363f51; border-radius: 26px; overflow: hidden; display: grid; }
  .tile svg, .tile b { grid-area: 1 / 1; }
  .tile svg { width: 118px; height: 180px; }
  .tile b { font-weight: 500; text-align: center; line-height: 40px; margin-top: 19px; height: 40px; }
  .tile polyline { fill: none; stroke-width: 3; vector-effect: non-scaling-stroke; stroke-linejoin: round; }
  .ok b { color: #2dc565; } .ok polyline { stroke: #2dc565; } .ok polygon { fill: #14322f; }
  .warn b { color: #f0a01c; } .warn polyline { stroke: #f0a01c; } .warn polygon { fill: #352c26; }

  .list-wrap { display: flex; justify-content: space-between; margin-top: 29px; height: 468px; overflow: hidden; padding: 0 1px 0 14px; }
  .list { width: 1313px; padding-top: 28px; display: flex; flex-direction: column; gap: 18.75px; }
  .thumb { width: 7px; height: 188px; background: #4b4f55; }
  .row { height: 97.5px; flex: none; border: 2px solid #222e3d; border-radius: 30px; background: #0e1629; display: flex; align-items: center; padding-left: 25px; }
  .dot { width: 28px; height: 28px; border-radius: 50%; border: 4px solid #1a6c5c; background: #10b981; flex: none; }
  .name { width: 519px; margin-left: 18px; font-size: 30px; font-weight: 500; color: #f8fafc; padding-bottom: 2px; }
  .mini { width: 35px; height: 35px; flex: none; fill: none; stroke-width: 6; }
  .rate { width: 427px; margin-left: 70px; font-size: 26.25px; color: #cbd5e1; padding-bottom: 3px; }
  .row .bars { margin-right: 23px; }
  .dbm { font-size: 22.5px; color: #cbd5e1; padding-top: 17px; }

  .map-panel { width: 713px; padding: 37px 36px 37px 37px; border-left-color: #8d96a0; }
  .map { position: relative; width: 635px; height: 1105px; border-radius: 15px; overflow: hidden; }
  .tiles { width: 635px; height: 1105px; display: block; }
  .roads polyline { fill: none; stroke: #fff; vector-effect: non-scaling-stroke; stroke-linejoin: round; stroke-linecap: round; }
  .roads .fine { stroke-width: 1; stroke: #f3f2f0; }
  .roads .minor { stroke-width: 2.3; }
  .roads .mid { stroke-width: 4.6; }
  .roads .major { stroke-width: 9; }
  .roads .tie { stroke-width: 3; stroke: #e9e9e9; stroke-dasharray: 1 2; stroke-linecap: butt; }
  .roads .bound { stroke-width: 1; stroke: #a9a6a6; }
  .city { font-size: 28px; font-weight: 700; fill: #666; text-anchor: middle; }
  .road-name { fill: #91888d; stroke: #fff; stroke-width: 3px; paint-order: stroke; text-anchor: middle; font-weight: 500; }
  .car { position: absolute; left: 303px; top: 526px; width: 28px; height: 54px; }
  .tower { position: absolute; left: 206px; top: 796px; width: 54px; height: 60px; stroke: #000; fill: none; }
  .tower circle { fill: #000; }
  .zoom { position: absolute; left: 19px; top: 19px; width: 61px; height: 118px; border: 2px solid rgba(0, 0, 0, .25); border-radius: 6px; display: flex; flex-direction: column; background-clip: padding-box; background: #fff; color: #000; }
  .zoom span { flex: 1; display: flex; align-items: center; justify-content: center; font: 700 41px 'Liberation Sans', sans-serif; }
  .zoom span + span { border-top: 1px solid #bbb; }
  .track { position: absolute; right: 8px; top: 8px; width: 193px; height: 88px; padding: 4px; border: 3px solid rgba(0, 0, 0, .2); border-radius: 8px; }
  .track button { width: 180px; height: 75px; border: 0; border-radius: 8px; background: #2563eb; color: #fff; font-size: 23px; font-weight: 500; }
  .attr { position: absolute; right: 0; bottom: 0; width: 418px; height: 31px; background: rgba(255, 255, 255, .8); display: flex; align-items: center; gap: 6px; font-size: 21.5px; color: #333; white-space: nowrap; }
  .attr svg { width: 22px; height: 15px; }
  .attr a { color: #0f789f; }

  footer { height: 90px; flex: none; background: #fcfcfc; display: flex; align-items: center; padding-left: 1026px; }
  .apps { width: 32px; height: 32px; margin-right: 42px; }
  .app { position: relative; width: 58px; height: 59px; border-radius: 23px; margin-right: 34px; flex: none; }
  .app svg { width: 58px; height: 59px; display: block; }
  .app em { position: absolute; right: -9px; top: -7px; width: 28px; height: 28px; border-radius: 50%; background: #f84e14; color: #fff; font: 500 21px/28px Roboto, sans-serif; text-align: center; }
  .play { background: #e6e6e6; }
  .net { background: linear-gradient(#626fd3, #6757d6); }
  .cam { background: linear-gradient(#cc1b48, #c4004d); margin-right: 30px; }
  .divider { width: 2px; height: 36px; background: #777; margin-right: 33px; }
  .set { background: linear-gradient(#365275, #2a3c62); }
  .note { background: linear-gradient(#cf3621, #c0201f); }
  .keys { width: 412px; height: 32px; margin-left: 331px; }
</style>
